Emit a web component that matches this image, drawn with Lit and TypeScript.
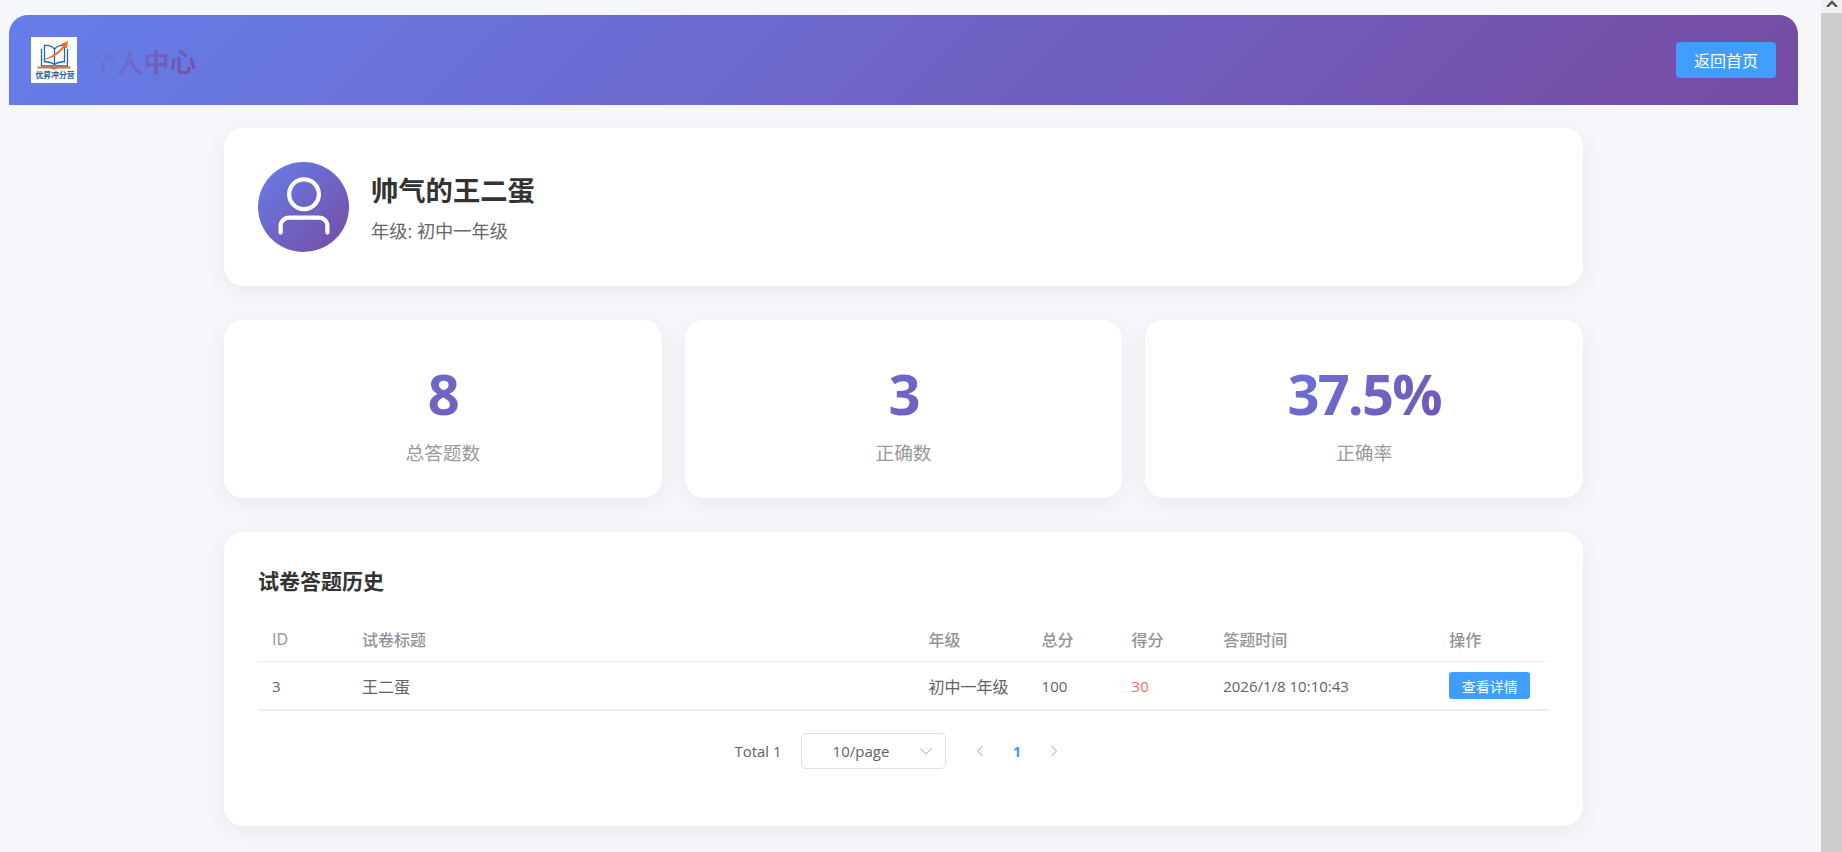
import { LitElement, html, css } from "lit";
import { customElement } from "lit/decorators.js";

const SANS = css`"Open Sans", "Noto Sans CJK SC", sans-serif`;

@customElement("app-root")
export class AppRoot extends LitElement {
  static styles = css`
    :host {
      display: flex;
      height: 852px;
      overflow: hidden;
      background: #f5f7fb;
      font-family: ${SANS};
      color: #333;
    }

    .page {
      flex: 1;
      min-width: 0;
      padding: 15px 23px 0 9px;
      box-sizing: border-box;
    }

    .scrollbar {
      width: 21px;
      flex: none;
      display: flex;
      flex-direction: column;
      background: #f1f1f1;
    }

    .scroll-btn {
      height: 13px;
      display: flex;
      justify-content: center;
      align-items: flex-start;
    }

    .scroll-thumb {
      flex: 1;
      background: #cdcdcd;
    }

    .header {
      height: 90px;
      display: flex;
      align-items: center;
      padding: 0 22px;
      border-radius: 19px 19px 0 0;
      background: linear-gradient(135deg, #667eea 0%, #764ba2 100%);
    }

    .logo {
      width: 46px;
      height: 46px;
      flex: none;
      display: block;
    }

    .page-title {
      margin: 4px 0 0 13px;
      font-size: 26.5px;
      line-height: 36px;
      font-weight: 700;
      background: linear-gradient(135deg, #667eea 0%, #764ba2 100%);
      -webkit-background-clip: text;
      background-clip: text;
      color: transparent;
    }

    .back-btn {
      margin-left: auto;
      width: 100px;
      height: 36px;
      border-radius: 4px;
      background: #409eff;
      color: #fff;
      font-size: 16px;
      display: flex;
      align-items: center;
      justify-content: center;
    }

    .content {
      width: 1359px;
      margin: 23px auto 0;
      display: flex;
      flex-direction: column;
      gap: 34px;
    }

    .card {
      background: #fff;
      border-radius: 19px;
      box-shadow: 0 5px 23px rgba(0, 0, 0, 0.06);
    }

    .profile {
      display: flex;
      align-items: center;
      gap: 22px;
      padding: 34px;
    }

    .avatar {
      width: 91px;
      height: 90px;
      border-radius: 50%;
      flex: none;
      display: flex;
      align-items: center;
      justify-content: center;
      background: linear-gradient(135deg, #667eea 0%, #764ba2 100%);
    }

    .avatar svg {
      width: 68px;
      height: 68px;
      fill: #fff;
    }

    .user-name {
      margin: 0;
      font-size: 27.3px;
      line-height: 40px;
      font-weight: 700;
      color: #333;
    }

    .user-grade {
      margin-top: 7px;
      font-size: 18.2px;
      line-height: 26px;
      color: #666;
    }

    .stats {
      display: grid;
      grid-template-columns: repeat(3, 1fr);
      gap: 23px;
    }

    .stat {
      height: 178px;
      padding: 0 34px;
      box-sizing: border-box;
      text-align: center;
    }

    .stat-value {
      margin-top: 38px;
      font-size: 56px;
      line-height: 70px;
      font-weight: 700;
      letter-spacing: -1.8px;
      background: linear-gradient(135deg, #667eea 0%, #764ba2 100%);
      -webkit-background-clip: text;
      background-clip: text;
      color: transparent;
    }

    .stat-label {
      margin-top: 12px;
      font-size: 18.7px;
      line-height: 26px;
      color: #999;
    }

    .history {
      height: 294px;
      padding: 34px 34px 0;
      box-sizing: border-box;
    }

    .history h2 {
      margin: 0 0 23px;
      font-size: 21px;
      line-height: 30px;
      font-weight: 700;
      color: #333;
    }

    .row {
      display: grid;
      grid-template-columns: 90px 566.6px 113px 90px 91.6px 226px 114px;
      align-items: center;
      font-size: 15px;
      color: #606266;
    }

    .row > div {
      padding-left: 14px;
      white-space: nowrap;
    }

    .row-head {
      height: 43px;
      padding-bottom: 2px;
      box-sizing: border-box;
      border-bottom: 1px solid #ebeef5;
      font-size: 16px;
      font-weight: 500;
      color: #909399;
    }

    .row-body {
      height: 47px;
      border-bottom: 2px solid #ebeef5;
    }

    .cjk {
      font-size: 16px;
    }

    .score {
      color: #f56c6c;
    }

    .detail-btn {
      width: 81px;
      height: 27px;
      border-radius: 3px;
      background: #409eff;
      color: #fff;
      font-size: 14px;
      display: flex;
      align-items: center;
      justify-content: center;
    }

    .pager {
      margin-top: 22px;
      display: flex;
      justify-content: center;
      align-items: center;
      height: 36px;
      font-size: 15px;
      color: #606266;
    }

    .page-size {
      width: 145px;
      height: 36px;
      margin: 0 16px 0 19px;
      box-sizing: border-box;
      border: 1px solid #dcdfe6;
      border-radius: 5px;
      display: flex;
      align-items: center;
      padding: 0 13px 0 31px;
      font-size: 15px;
    }

    .page-size svg {
      margin-left: auto;
    }

    .page-btn {
      width: 37px;
      height: 36px;
      display: flex;
      align-items: center;
      justify-content: center;
      color: #c0c4cc;
    }

    .page-btn.current {
      color: #409eff;
      font-weight: 700;
      font-size: 15px;
    }
  `;

  render() {
    return html`
      <div class="page">
        <div class="header">
          <svg class="logo" viewBox="0 0 46 46">
            <rect width="46" height="46" fill="#fff" />
            <path d="M10.500 12v17h12.500M36.500 12v17H24" fill="none" stroke="#1d67b5" stroke-width="1.300" />
            <path d="M13.500 8.500c4-.5 7.500 .5 10 3.500v15.500c-2.500-2-6-3-10-2.700zM33.500 8.500c-4-.5-7.500 .5-10 3.500v15.500c2.500-2 6-3 10-2.700z" fill="#fff" stroke="#1d67b5" stroke-width="1.300" />
            <path d="M6 23.500c10-1 19-6 26-14.500l-2.300-1.800 7.300-3.200-1 7.800-2.300-1.800C27 19 17 23.500 6 23.500z" fill="#f0701e" />
            <path d="M6 29.500h34l-1 2H26.500l-3.500 1.300-3.500-1.300H7z" fill="#f0701e" />
            <text x="24" y="41" text-anchor="middle" font-size="7.800" font-weight="700" fill="#1f5a99" font-family="Noto Sans CJK SC, sans-serif">优昇冲分营</text>
          </svg>
          <h1 class="page-title">个人中心</h1>
          <div class="back-btn">返回首页</div>
        </div>

        <div class="content">
          <div class="card profile">
            <div class="avatar">
              <svg viewBox="0 0 1024 1024">
                <path d="M512 512a192 192 0 1 0 0-384 192 192 0 0 0 0 384m0 64a256 256 0 1 1 0-512 256 256 0 0 1 0 512m320 320v-96a96 96 0 0 0-96-96H288a96 96 0 0 0-96 96v96a32 32 0 1 1-64 0v-96a160 160 0 0 1 160-160h448a160 160 0 0 1 160 160v96a32 32 0 1 1-64 0" />
              </svg>
            </div>
            <div>
              <h3 class="user-name">帅气的王二蛋</h3>
              <div class="user-grade">年级: 初中一年级</div>
            </div>
          </div>

          <div class="stats">
            <div class="card stat">
              <div class="stat-value">8</div>
              <div class="stat-label">总答题数</div>
            </div>
            <div class="card stat">
              <div class="stat-value">3</div>
              <div class="stat-label">正确数</div>
            </div>
            <div class="card stat">
              <div class="stat-value">37.5%</div>
              <div class="stat-label">正确率</div>
            </div>
          </div>

          <div class="card history">
            <h2>试卷答题历史</h2>
            <div class="row row-head">
              <div>ID</div>
              <div>试卷标题</div>
              <div>年级</div>
              <div>总分</div>
              <div>得分</div>
              <div>答题时间</div>
              <div>操作</div>
            </div>
            <div class="row row-body">
              <div>3</div>
              <div class="cjk">王二蛋</div>
              <div class="cjk">初中一年级</div>
              <div>100</div>
              <div class="score">30</div>
              <div>2026/1/8 10:10:43</div>
              <div><span class="detail-btn">查看详情</span></div>
            </div>

            <div class="pager">
              <span>Total 1</span>
              <div class="page-size">
                <span>10/page</span>
                <svg width="12" height="7" viewBox="0 0 12 7" fill="none" stroke="#a8abb2" stroke-width="1">
                  <path d="M.5 .5l5.500 5.500 5.500-5.500" />
                </svg>
              </div>
              <div class="page-btn">
                <svg width="8" height="12" viewBox="0 0 8 12" fill="none" stroke="#c0c4cc" stroke-width="1.100">
                  <path d="M6.500 1l-5 5 5 5" />
                </svg>
              </div>
              <div class="page-btn current">1</div>
              <div class="page-btn">
                <svg width="8" height="12" viewBox="0 0 8 12" fill="none" stroke="#c0c4cc" stroke-width="1.100">
                  <path d="M1.500 1l5 5-5 5" />
                </svg>
              </div>
            </div>
          </div>
        </div>
      </div>
      <div class="scrollbar">
        <div class="scroll-btn">
          <svg width="12" height="7" viewBox="0 0 12 7" fill="none" stroke="#505050" stroke-width="2.400">
            <path d="M1 7l5-5 5 5" />
          </svg>
        </div>
        <div class="scroll-thumb"></div>
      </div>
    `;
  }
}
